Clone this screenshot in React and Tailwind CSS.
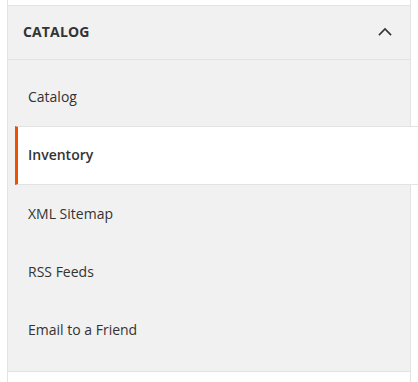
import React from "react";

const items = [
  { label: "Catalog" },
  { label: "Inventory", current: true },
  { label: "XML Sitemap" },
  { label: "RSS Feeds" },
  { label: "Email to a Friend" },
];

// Collapsible config section with its tab list
const App = () => {
  return (
    <div className="min-h-[382px] bg-white font-['Open_Sans',sans-serif] text-[#333333]">
      <div className="ml-[7px] min-h-[382px] w-[404px] border-x border-[#e3e3e3] pt-[5px]">
        <div className="border-y border-[#e3e3e3] bg-[#f1f1f1]">
          <div className="flex h-[54px] items-center justify-between border-b border-[#e3e3e3] pb-[2px] pl-[15px] pr-[13px]">
            <span className="text-[14px] font-bold uppercase tracking-[0.01em]">Catalog</span>
            <svg width="24" height="24" viewBox="0 0 24 24" fill="none" stroke="#333333" strokeWidth="1.6" strokeLinecap="square">
              <polyline points="6.5 14.5 12 9 17.5 14.5" />
            </svg>
          </div>
          <ul className="pb-[12px] pt-[8px]">
            {items.map((item) => (
              <li
                key={item.label}
                className={
                  item.current
                    ? "ml-[7px] mr-[-9px] flex h-[59px] items-center border-y border-l-[3px] border-y-[#e3e3e3] border-l-[#eb5202] bg-white pb-[2px] pl-[10px] text-[14px] font-semibold"
                    : "ml-[7px] flex h-[58px] items-center border-y border-l-[3px] border-transparent pb-[2px] pl-[10px] text-[14px]"
                }
              >
                {item.label}
              </li>
            ))}
          </ul>
        </div>
      </div>
    </div>
  );
};

export default App;
